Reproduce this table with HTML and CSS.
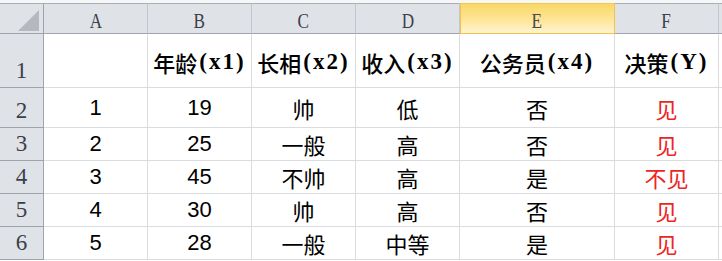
FILE: index.html
```html
<!DOCTYPE html>
<html lang="zh">
<head>
<meta charset="utf-8">
<link rel="stylesheet" href="styles.css">
</head>
<body>
<div class="sheet">
  <div class="topbar"></div>

  <div class="corner"><svg width="22" height="22" viewBox="0 0 22 22"><polygon points="0,21 21,21 21,0" fill="#b5b9bf"/></svg></div>
  <div class="col"><span class="ltr">A</span></div>
  <div class="col"><span class="ltr">B</span></div>
  <div class="col"><span class="ltr">C</span></div>
  <div class="col"><span class="ltr">D</span></div>
  <div class="col sel"><span class="ltr">E</span></div>
  <div class="col"><span class="ltr">F</span></div>
  <div class="col end"></div>

  <div class="rh">1</div>
  <div class="c"></div>
  <div class="c hd">年龄<span class="lat">(x1)</span></div>
  <div class="c hd">长相<span class="lat">(x2)</span></div>
  <div class="c hd">收入<span class="lat">(x3)</span></div>
  <div class="c hd">公务员<span class="lat">(x4)</span></div>
  <div class="c hd">决策<span class="lat">(Y)</span></div>
  <div class="c end"></div>

  <div class="rh">2</div>
  <div class="c num">1</div>
  <div class="c num">19</div>
  <div class="c">帅</div>
  <div class="c">低</div>
  <div class="c">否</div>
  <div class="c red">见</div>
  <div class="c end"></div>

  <div class="rh">3</div>
  <div class="c num">2</div>
  <div class="c num">25</div>
  <div class="c">一般</div>
  <div class="c">高</div>
  <div class="c">否</div>
  <div class="c red">见</div>
  <div class="c end"></div>

  <div class="rh">4</div>
  <div class="c num">3</div>
  <div class="c num">45</div>
  <div class="c">不帅</div>
  <div class="c">高</div>
  <div class="c">是</div>
  <div class="c red">不见</div>
  <div class="c end"></div>

  <div class="rh">5</div>
  <div class="c num">4</div>
  <div class="c num">30</div>
  <div class="c">帅</div>
  <div class="c">高</div>
  <div class="c">否</div>
  <div class="c red">见</div>
  <div class="c end"></div>

  <div class="rh">6</div>
  <div class="c num">5</div>
  <div class="c num">28</div>
  <div class="c">一般</div>
  <div class="c">中等</div>
  <div class="c">是</div>
  <div class="c red">见</div>
  <div class="c end"></div>
</div>
</body>
</html>
```
FILE: styles.css
```css
html, body {
  margin: 0;
  padding: 0;
  background: #ffffff;
}

.sheet {
  display: grid;
  grid-template-columns: 44px 104px 104px 104px 104px 155px 104px 3px;
  grid-template-rows: 3px 31px 54px 40px 33px 33px 33px 33px;
  width: 722px;
  font-family: "Noto Sans CJK SC", sans-serif;
  font-size: 22px;
  color: #000;
}

.topbar {
  grid-column: 1 / -1;
  background: #f6f7f9;
}

.corner, .col {
  box-sizing: border-box;
  background: #dfe3e8;
  border-top: 1px solid #a9aeb5;
  border-bottom: 1px solid #9ea4ac;
  border-right: 1px solid #c3c8cf;
}

.corner {
  border-right-color: #9ea4ac;
  display: flex;
  align-items: flex-end;
  justify-content: flex-end;
  padding: 0 3px 1px 0;
}

.corner svg {
  display: block;
}

.col {
  display: flex;
  align-items: center;
  justify-content: center;
  padding-top: 5px;
  font-family: "Liberation Serif", serif;
  font-size: 22px;
  color: #3b4048;
}

.ltr {
  display: inline-block;
  transform: scaleX(0.78);
}

.col.sel {
  background: linear-gradient(#f9d767, #fde38f 45%, #fff3cf);
  border-top-color: #f4c842;
  border-bottom-color: #f2c24a;
  border-right-color: #f2c24a;
  box-shadow: inset 1px 0 0 #f2c24a;
  color: #4a4a4a;
}

.col.end {
  border-right: none;
}

.rh {
  box-sizing: border-box;
  background: #dfe3e8;
  border-right: 1px solid #9ea4ac;
  border-bottom: 1px solid #9ea4ac;
  display: flex;
  align-items: flex-end;
  justify-content: center;
  padding-bottom: 5px;
  font-family: "Liberation Serif", serif;
  font-size: 23px;
  line-height: 1;
  color: #3b4048;
}

.c {
  box-sizing: border-box;
  border-right: 1px solid #dadcdf;
  border-bottom: 1px solid #dadcdf;
  display: flex;
  align-items: center;
  justify-content: center;
  white-space: nowrap;
  line-height: 1;
}

.c.end {
  border-right: none;
}

.hd {
  font-weight: 500;
  padding-top: 2px;
}

.lat {
  font-family: "Liberation Serif", serif;
  font-weight: 700;
  font-size: 23px;
  letter-spacing: 2px;
  margin-left: 2px;
}

.num {
  font-family: "Liberation Sans", sans-serif;
  font-size: 22px;
}

.red {
  color: #ee2424;
}
```
